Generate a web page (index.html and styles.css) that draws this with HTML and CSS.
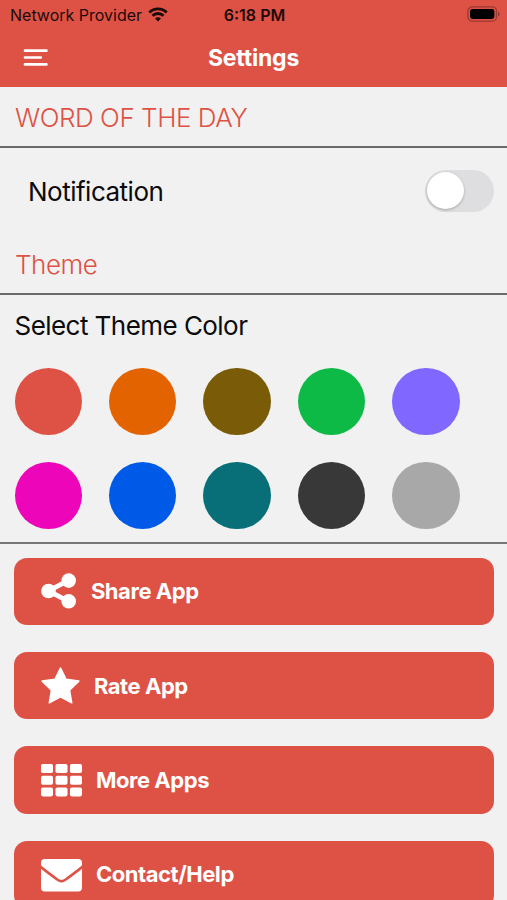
FILE: index.html
```html
<!DOCTYPE html>
<html lang="en">
<head>
    <meta charset="UTF-8">
    <meta name="viewport" content="width=device-width, initial-scale=1.0">
    <title>Settings</title>
    <link rel="stylesheet" href="styles.css">
</head>
<body>
    <div class="status-bar">
        <div class="provider">
            <span class="provider-name">Network Provider</span>
            <svg class="wifi" width="20" height="15" viewBox="0 0 20 15">
                <path d="M1.3 5.5a12.3 12.3 0 0 1 17.4 0M4.5 8.7a7.8 7.8 0 0 1 11 0" fill="none" stroke="#1c0a08" stroke-width="2.9"/>
                <path d="M10 14.6l-3-3a4.3 4.3 0 0 1 6 0z" fill="#1c0a08"/>
            </svg>
        </div>
        <span class="time">6:18 PM</span>
        <svg class="battery" width="34" height="16" viewBox="0 0 34 16">
            <rect x="0.9" y="0.9" width="28.6" height="14.2" rx="4.2" fill="none" stroke="#98382f" stroke-width="1.3"/>
            <rect x="3" y="3" width="24.4" height="10" rx="2.4" fill="#000"/>
            <path d="M31 5.5q1.7.7 1.7 2.5T31 10.5z" fill="#98382f"/>
        </svg>
    </div>
    <header class="header">
        <svg class="menu-icon" width="25" height="18" viewBox="0 0 25 18">
            <path d="M2 1.7h21.4M2 8.5h15.8M2 15.4h21.4" stroke="#fff" stroke-width="2.7" stroke-linecap="round"/>
        </svg>
        <h1>Settings</h1>
    </header>

    <h2 class="section-title">WORD OF THE DAY</h2>
    <div class="setting">
        <span>Notification</span>
        <div class="switch"><div class="knob"></div></div>
    </div>

    <h2 class="section-title">Theme</h2>
    <div class="themes">
        <p>Select Theme Color</p>
        <div class="colors">
            <div class="color red"></div>
            <div class="color orange"></div>
            <div class="color brown"></div>
            <div class="color green"></div>
            <div class="color purple"></div>
            <div class="color pink"></div>
            <div class="color blue"></div>
            <div class="color teal"></div>
            <div class="color dark"></div>
            <div class="color gray"></div>
        </div>
    </div>

    <div class="buttons">
        <div class="button">
            <svg width="36" height="36" viewBox="0 0 36 36" fill="#fff">
                <path d="M28 7.2L7.5 18 28 28.6" fill="none" stroke="#fff" stroke-width="4.8"/>
                <circle cx="7.5" cy="18" r="7.3"/>
                <circle cx="27.7" cy="7.6" r="7.3"/>
                <circle cx="27.7" cy="28.3" r="7.3"/>
            </svg>
            <span>Share App</span>
        </div>
        <div class="button">
            <svg width="39" height="37" viewBox="0 0 39 37" fill="#fff">
                <path d="M19.5 1.2L25 12.3 37.8 14.1 28.5 23.1 30.7 35.8 19.5 29.8 8.3 35.8 10.5 23.1 1.2 14.1 14 12.3Z" stroke="#fff" stroke-width="1.6" stroke-linejoin="round"/>
            </svg>
            <span>Rate App</span>
        </div>
        <div class="button">
            <svg width="41" height="33" viewBox="0 0 41 33" fill="#fff">
                <rect width="12" height="9" rx="1.8"/>
                <rect x="14.5" width="12" height="9" rx="1.8"/>
                <rect x="29" width="12" height="9" rx="1.8"/>
                <rect y="11.7" width="12" height="9" rx="1.8"/>
                <rect x="14.5" y="11.7" width="12" height="9" rx="1.8"/>
                <rect x="29" y="11.7" width="12" height="9" rx="1.8"/>
                <rect y="23.4" width="12" height="9" rx="1.8"/>
                <rect x="14.5" y="23.4" width="12" height="9" rx="1.8"/>
                <rect x="29" y="23.4" width="12" height="9" rx="1.8"/>
            </svg>
            <span>More Apps</span>
        </div>
        <div class="button">
            <svg class="mail" width="41" height="33" viewBox="0 0 41 33" fill="#fff">
                <path d="M0 6.2V3.8Q0 0 3.8 0H37.2Q41 0 41 3.8V6.2Q39 8.4 26.5 17.4 22.8 20.8 20.5 20.8T14.5 17.4Q2 8.4 0 6.2Z"/>
                <path d="M0 9.8Q2.5 12.2 13 19.7 17.5 23.4 20.5 23.4T28 19.7Q38.5 12.2 41 9.8V28.5Q41 32.4 37.2 32.4H3.8Q0 32.4 0 28.5Z"/>
            </svg>
            <span>Contact/Help</span>
        </div>
    </div>
</body>
</html>
```
FILE: styles.css
```css
* {
    box-sizing: border-box;
}
body {
    margin: 0;
    height: 900px;
    overflow: hidden;
    background: #f1f1f1;
    color: #0b0b0b;
    font-family: Inter, sans-serif;
}
.status-bar {
    display: grid;
    grid-template-columns: 1fr auto 1fr;
    align-items: center;
    height: 29px;
    padding: 0 8px 0 10px;
    background: #de5246;
    color: #1c0a08;
    font-size: 16px;
}
.provider {
    display: flex;
    align-items: center;
    gap: 6px;
}
.provider-name {
    white-space: nowrap;
}
.time {
    font-weight: 600;
}
.battery {
    justify-self: end;
    margin-top: -1px;
    margin-right: -2px;
}
.header {
    display: grid;
    grid-template-columns: 1fr auto 1fr;
    align-items: center;
    height: 58px;
    padding: 0 23px;
    background: #de5246;
    color: #fff;
}
.header h1 {
    margin: 0;
    padding-bottom: 1px;
    font-size: 23px;
    font-weight: 700;
    letter-spacing: -0.2px;
}
.section-title {
    margin: 0;
    height: 61px;
    padding-left: 15px;
    border-bottom: 2px solid #6a6a6a;
    color: #de5246;
    font-size: 26px;
    font-weight: 350;
    line-height: 61px;
    letter-spacing: -0.45px;
}
.setting {
    display: flex;
    justify-content: space-between;
    align-items: center;
    height: 86px;
    padding: 0 13px 0 28px;
    font-size: 26px;
    letter-spacing: -0.5px;
}
.switch {
    width: 69px;
    height: 42px;
    padding: 2px;
    border-radius: 21px;
    background: #dedee0;
}
.knob {
    width: 37px;
    height: 37px;
    border-radius: 50%;
    background: #fff;
    box-shadow: 0 1px 3px rgba(0, 0, 0, 0.25);
}
.themes {
    height: 249px;
    padding-left: 14.5px;
    border-bottom: 2px solid #777;
}
.themes p {
    margin: 0;
    height: 72.5px;
    font-size: 26px;
    line-height: 61px;
    letter-spacing: -0.55px;
}
.colors {
    display: grid;
    grid-template-columns: repeat(5, 67.5px);
    gap: 26.9px;
}
.color {
    height: 67.5px;
    border-radius: 50%;
}
.red { background: #de5246; }
.orange { background: #e26300; }
.brown { background: #7a5c08; }
.green { background: #0dba45; }
.purple { background: #8067ff; }
.pink { background: #ec05b9; }
.blue { background: #005ae8; }
.teal { background: #086e78; }
.dark { background: #383838; }
.gray { background: #a8a8a8; }
.buttons {
    display: flex;
    flex-direction: column;
    gap: 27px;
    padding: 13.6px 13.5px 0 14.4px;
}
.button {
    display: flex;
    align-items: center;
    gap: 14px;
    height: 67.4px;
    padding-left: 26.5px;
    border-radius: 13px;
    background: #de5246;
    color: #fff;
    font-size: 22px;
    font-weight: 700;
    letter-spacing: -0.45px;
}
.mail {
    margin-top: 2px;
}
```
